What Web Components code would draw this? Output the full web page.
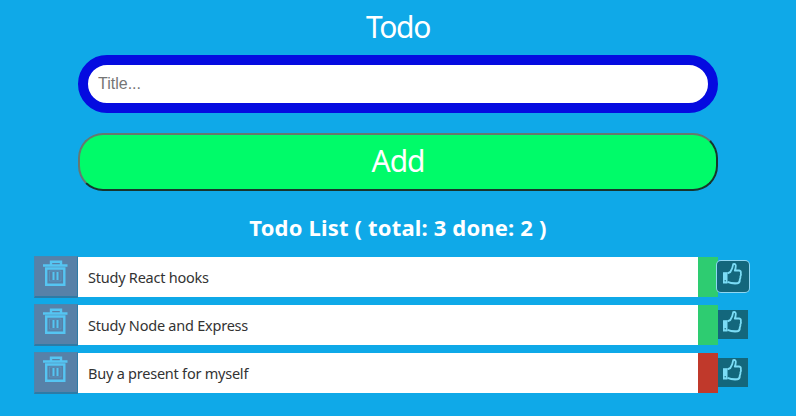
<!DOCTYPE html>
<html lang="en"><head><meta charset="utf-8"><title>Todo</title>
<style>html,body{margin:0;height:100%;background:#0fa9e8;overflow:hidden}</style></head>
<body><todo-app></todo-app>
<script>
class TodoButton extends HTMLElement{
 constructor(){super();this.attachShadow({mode:'open'}).innerHTML=`<style>
 :host{display:block}
 button{box-sizing:border-box;width:640px;height:58px;padding:0 0 3px;border:2px solid;border-color:#66786f #17352d #17352d #66786f;border-radius:25px;background:#00fb69;color:#fff;font:30px/50px "Noto Sans",sans-serif;letter-spacing:-1.1px;display:block}
 </style><button><slot></slot></button>`}
}
customElements.define('todo-button',TodoButton);
class TodoInput extends HTMLElement{
 constructor(){super();this.attachShadow({mode:'open'}).innerHTML=`<style>
 :host{display:block}
 input{box-sizing:border-box;display:block;width:640px;height:58px;border:10px solid #050be0;border-radius:29px;padding:0 10px;background:#fff;font:16px "Liberation Sans",sans-serif;outline:0}
 input::placeholder{color:#757575;opacity:1}
 </style><input placeholder="Title...">`}
}
customElements.define('todo-input',TodoInput);
class TodoItem extends HTMLElement{
 constructor(){super();this.attachShadow({mode:'open'}).innerHTML=`<style>
 :host{display:flex;align-items:flex-start;height:40px;--state:#2ecc71}
 :host([pending]){--state:#c0392b}
 svg{display:block}
 .trash{box-sizing:border-box;width:44px;height:42px;margin:-1px 0 -1px;padding:3px 0 0 8px;border:1px solid #4b86ae;border-right:1px solid #2d7ba6;border-bottom:2px solid #2d7ba6;background:#5781a8}
 .text{box-sizing:border-box;width:620px;height:40px;padding-left:10px;background:#fff;color:#333;font:14.5px/41px "Noto Sans",sans-serif;white-space:nowrap;letter-spacing:-.23px}
 .state{width:20px;height:40px;background:var(--state)}
 .like{box-sizing:border-box;width:30px;height:29px;margin-top:5px;padding:0 0 0 4px;background:#13677c}
 :host([focused]) .like{border-radius:3px;box-shadow:0 0 0 1px #13677c,0 0 0 2px #8fd7f2}
 </style>
 <div class="trash"><svg width="26" height="27" fill="none" stroke="#55c5f2" stroke-width="2.4"><path d="M8 5V1.7H18V5M0 5.5H24.5M3.2 8.5H21.3V24.8H3.2Z"/><path d="M10.5 12V20M14.5 12V20" stroke-width="2"/><path d="M6.5 11H18V21H6.5Z" stroke-width="1" opacity=".3"/></svg></div>
 <div class="text"><slot></slot></div><div class="state"></div>
 <div class="like"><svg width="22" height="25" viewBox="0 0 22 22" preserveAspectRatio="none"><path d="M1.5 9.5H5V18.5H1.5Z" fill="#7bdcf5" stroke="#7bdcf5"/><circle cx="3.2" cy="16.5" r=".7" fill="#13677c"/><path d="M5.5 10L8.3 8.8L10.2 5.5L11.2 2Q13.3 1.2 13.8 3.2Q13.8 5.5 12.8 7.5H17.2Q19.3 7.8 18.8 9.8Q19.4 11.5 18.4 12.7Q18.7 14.3 17.8 15.4Q18 18.3 15.5 18.7Q10 19.2 5.5 17.5" fill="none" stroke="#7bdcf5" stroke-width="1.8" stroke-linejoin="round"/></svg></div>`}
}
customElements.define('todo-item',TodoItem);
class TodoApp extends HTMLElement{
 constructor(){super();this.attachShadow({mode:'open'}).innerHTML=`<style>
 :host{display:flex;flex-direction:column;align-items:center;width:796px;height:416px;color:#fff;font-family:"Noto Sans",sans-serif}
 .title{height:55px;font-size:30px;line-height:53px;letter-spacing:-1.3px}
 todo-button{margin-top:20px}
 h2{margin:16px 0 10px;height:40px;font-size:22px;line-height:40px;letter-spacing:.17px;font-weight:700;white-space:nowrap}
 .list{display:grid;gap:8px;align-self:flex-start;padding-left:34px}
 </style><div class="title">Todo</div><todo-input></todo-input><todo-button>Add</todo-button>
 <h2>Todo List ( total: 3 done: 2 )</h2>
 <div class="list"><todo-item focused>Study React hooks</todo-item><todo-item>Study Node and Express</todo-item><todo-item pending>Buy a present for myself</todo-item></div>`}
}
customElements.define('todo-app',TodoApp);
</script></body></html>
